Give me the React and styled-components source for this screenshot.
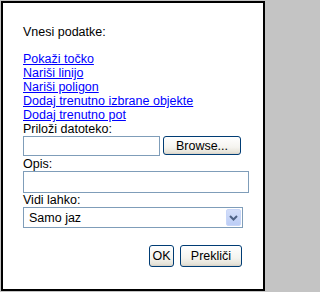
import React from "react";
import styled, { createGlobalStyle } from "styled-components";

const Global = createGlobalStyle`
  html, body {
    margin: 0;
    padding: 0;
    background: #c4c4c4;
  }
  body {
    font-family: "Liberation Sans", Arial, sans-serif;
    font-size: 12.5px;
    color: #000;
  }
`;

const links = [
  "Pokaži točko",
  "Nariši linijo",
  "Nariši poligon",
  "Dodaj trenutno izbrane objekte",
  "Dodaj trenutno pot",
];

const App = () => {
  return (
    <>
      <Global />
      <Frame>
        <Title>Vnesi podatke:</Title>
        <LinkList>
          {links.map((l) => (
            <Link key={l} href="#">
              {l}
            </Link>
          ))}
        </LinkList>
        <Label>Priloži datoteko:</Label>
        <FileRow>
          <Field $w={137} $h={20} />
          <Button $w={78} $h={19}>Browse...</Button>
        </FileRow>
        <Label $top={1}>Opis:</Label>
        <Field $w={226} $h={22} />
        <Label>Vidi lahko:</Label>
        <Select>
          <SelectText>Samo jaz</SelectText>
          <Arrow>
            <svg width="9" height="6" viewBox="0 0 9 6">
              <path d="M1 1 L4.5 4.5 L8 1" fill="none" stroke="#4d6185" strokeWidth="2" />
            </svg>
          </Arrow>
        </Select>
        <Actions>
          <Button $w={25} $h={22}>OK</Button>
          <Button $w={62} $h={22}>Prekliči</Button>
        </Actions>
      </Frame>
    </>
  );
};

export default App;

const Frame = styled.div`
  box-sizing: border-box;
  margin: 1px 0 0 1px;
  width: 264px;
  height: 290px;
  border: 2px solid #000;
  background: #fff;
  padding: 22px 0 0 20px;
  display: flex;
  flex-direction: column;
  align-items: flex-start;
`;
const Title = styled.div`
  line-height: 14px;
  margin-bottom: 13px;
`;
const LinkList = styled.div`
  display: flex;
  flex-direction: column;
  align-items: flex-start;
`;
const Link = styled.a`
  color: #0000ff;
  text-decoration: underline;
  line-height: 14px;
`;
const Label = styled.div`
  line-height: 14px;
  margin-top: ${(p) => p.$top || 0}px;
`;
const FileRow = styled.div`
  display: flex;
  align-items: flex-start;
  gap: 3px;
`;
const Field = styled.input`
  box-sizing: border-box;
  width: ${(p) => p.$w}px;
  height: ${(p) => p.$h}px;
  border: 1px solid #7f9db9;
  background: #fff;
  margin: 0;
  padding: 0 3px;
  outline: none;
`;
const Button = styled.button`
  box-sizing: border-box;
  width: ${(p) => p.$w}px;
  height: ${(p) => p.$h}px;
  margin: 0;
  padding: 0;
  border: 1px solid #003c74;
  border-radius: 3px;
  background: linear-gradient(#ffffff, #f5f4ef 60%, #e6e3d9 90%, #d6d0c5);
  font-family: "Liberation Sans", Arial, sans-serif;
  font-size: 12.5px;
  color: #000;
  display: flex;
  align-items: center;
  justify-content: center;
`;
const Select = styled.div`
  box-sizing: border-box;
  width: 220px;
  height: 21px;
  border: 1px solid #7f9db9;
  background: #fff;
  display: flex;
  align-items: stretch;
  padding: 1px;
`;
const SelectText = styled.div`
  flex: 1;
  display: flex;
  align-items: center;
  padding-left: 4px;
`;
const Arrow = styled.div`
  width: 15px;
  border-radius: 2px;
  background: linear-gradient(#d3def9, #bccdf6);
  border: 1px solid #c8d6f8;
  box-sizing: border-box;
  display: flex;
  align-items: center;
  justify-content: center;
`;
const Actions = styled.div`
  align-self: stretch;
  display: flex;
  justify-content: flex-end;
  gap: 6px;
  margin-top: 17px;
  padding-right: 21px;
`;
